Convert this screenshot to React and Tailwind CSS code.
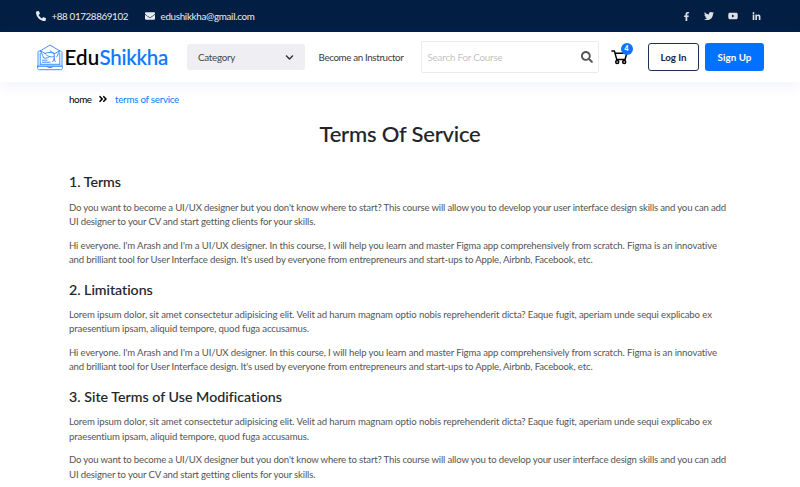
import { useLayoutEffect, useRef } from "react";
import {
  FaPhoneAlt,
  FaEnvelope,
  FaFacebookF,
  FaTwitter,
  FaYoutube,
  FaLinkedinIn,
  FaChevronDown,
  FaSearch,
  FaAngleDoubleRight,
} from "react-icons/fa";

// One line of text whose tracking is adjusted so that it fills a given measure.
function Fit({ width, className = "", children }) {
  const ref = useRef(null);
  useLayoutEffect(() => {
    const el = ref.current;
    el.style.letterSpacing = "0px";
    const natural = el.getBoundingClientRect().width;
    el.style.letterSpacing = `${(width - natural) / el.textContent.length}px`;
  }, [width]);
  return (
    <span ref={ref} className={`inline-block whitespace-nowrap ${className}`}>
      {children}
    </span>
  );
}

const want = [
  [657, "Do you want to become a UI/UX designer but you don't know where to start? This course will allow you to develop your user interface design skills and you can add"],
  [246, "UI designer to your CV and start getting clients for your skills."],
];
const arash = [
  [648, "Hi everyone. I'm Arash and I'm a UI/UX designer. In this course, I will help you learn and master Figma app comprehensively from scratch. Figma is an innovative"],
  [523.5, "and brilliant tool for User Interface design. It's used by everyone from entrepreneurs and start-ups to Apple, Airbnb, Facebook, etc."],
];
const lorem = [
  [643, "Lorem ipsum dolor, sit amet consectetur adipisicing elit. Velit ad harum magnam optio nobis reprehenderit dicta? Eaque fugit, aperiam unde sequi explicabo ex"],
  [240, "praesentium ipsam, aliquid tempore, quod fuga accusamus."],
];

const sections = [
  { title: "1. Terms", width: 52, paragraphs: [want, arash] },
  { title: "2. Limitations", width: 84, paragraphs: [lorem, arash] },
  { title: "3. Site Terms of Use Modifications", width: 213, paragraphs: [lorem, want] },
];

function LogoMark() {
  return (
    <svg viewBox="0 0 26 27" className="h-[27px] w-[26px] shrink-0" fill="none" stroke="#2b86ff" strokeWidth="0.9" strokeLinejoin="round" strokeLinecap="round">
      <path d="M4 7H2.500C1.500 7 1 7.500 1 8.500v13.600h24V8.500C25 7.500 24.500 7 23.500 7H22" />
      <path d="M3.200 20.300V9.200M22.800 20.300V9.200M3.200 20.300h19.600" />
      <path d="M3.500 6.800 13 1l9.500 5.800-4.500 2.700c-2.500-1.500-7.500-1.500-10 0L3.500 6.800Z" fill="#fff" />
      <path d="M3.500 6.800 6.800 14c3 .6 4.200-.2 5.700-1.400M13 6.600l4.200 3.600v5M8 9.500c1.500 2.500 5 4 9 3.200M22.500 6.800l-2.700 6" />
      <path d="m17.200 15-1.500 2.600M17.200 15l1 2.600M5.500 16.200h4.500M5.500 18.200h7.500" />
      <path d="M.6 22.300h24.800v1.500c0 1-.7 1.900-1.800 1.900H2.400c-1.100 0-1.800-.9-1.800-1.900v-1.500Z" fill="#fff" />
      <path d="M10 22.800c.3 1.200 5.700 1.200 6 0" />
    </svg>
  );
}

function CartIcon() {
  return (
    <svg viewBox="0 0 17 16" className="h-[16px] w-[17px]" fill="none" stroke="#000" strokeWidth="1.500" strokeLinejoin="round" strokeLinecap="round">
      <path d="M.9 1.900h2.500l2.300 8.500h8.400l1.700-6.200H4.100" />
      <circle cx="6.200" cy="13.100" r="1.500" />
      <circle cx="13.200" cy="13.100" r="1.500" />
    </svg>
  );
}

function TopBar() {
  return (
    <div className="flex h-8 items-center bg-[#021f43] pr-[39px] pl-[36px] text-[9.800px] text-[#e8ebef]">
      <FaPhoneAlt className="size-[10px]" />
      <Fit width={76.5} className="ml-[5.500px]">+88 01728869102</Fit>
      <FaEnvelope className="ml-[17px] size-[10px]" />
      <Fit width={94} className="ml-[5.500px]">edushikkha@gmail.com</Fit>
      <div className="ml-auto flex items-center text-[#dcdfe4]">
        <FaFacebookF className="size-[9px]" />
        <FaTwitter className="ml-[13px] size-[10px]" />
        <FaYoutube className="ml-[14px] size-[10px]" />
        <FaLinkedinIn className="ml-[14px] size-[9px]" />
      </div>
    </div>
  );
}

function NavBar() {
  return (
    <header className="flex h-[50px] items-center bg-white pr-9 pl-[36.500px] shadow-[0_3px_14px_rgba(80,90,240,0.09)]">
      <LogoMark />
      <div className="ml-[2px] flex w-[105px] text-[20.500px] leading-none font-medium [-webkit-text-stroke:0.15px_currentColor]">
        <Fit width={35} className="text-black">Edu</Fit>
        <Fit width={68.5} className="text-[#0a78ff]">Shikkha</Fit>
      </div>
      <button className="ml-[17px] flex h-[26px] w-[118px] shrink-0 items-center justify-between rounded-[3px] bg-[#efeff3] pr-[11px] pl-[11.500px] text-[9.800px] text-[#444]">
        <Fit width={37}>Category</Fit>
        <FaChevronDown className="size-[9px] text-[#333]" />
      </button>
      <a className="ml-[14px] text-[9.800px] text-[#3c3c3c]">
        <Fit width={85}>Become an Instructor</Fit>
      </a>
      <div className="ml-[17px] flex h-8 w-[178px] shrink-0 items-center justify-between rounded-[2px] border border-[#ebebed] pr-[5px] pl-[6px] text-[9.800px] text-[#c4c4c4]">
        <Fit width={75}>Search For Course</Fit>
        <FaSearch className="size-[12px] text-[#555]" />
      </div>
      <div className="relative ml-[12px] shrink-0">
        <CartIcon />
        <span className="absolute -top-[6.500px] left-[10px] flex size-[12px] items-center justify-center rounded-full bg-[#0a74ff] text-[7px] font-black text-white">
          4
        </span>
      </div>
      <button className="ml-auto flex h-[28px] w-[51px] items-center justify-center rounded-[3px] border border-[#1d3355] text-[9.800px] font-bold text-[#16294a]">
        <Fit width={26}>Log In</Fit>
      </button>
      <button className="ml-[6px] flex h-[28px] w-[59px] items-center justify-center rounded-[3px] bg-[#0072ff] text-[9.800px] font-bold text-white">
        <Fit width={34}>Sign Up</Fit>
      </button>
    </header>
  );
}

export default function App() {
  return (
    <div className="h-[487px] w-[800px] overflow-hidden bg-white font-['Lato','Liberation_Sans',sans-serif]">
      <TopBar />
      <NavBar />
      <main className="px-[69px]">
        <nav className="flex h-[34px] items-center text-[9.800px]">
          <Fit width={22.5} className="text-black">home</Fit>
          <FaAngleDoubleRight className="ml-[6.500px] size-[10px] text-black" />
          <Fit width={64} className="ml-[7px] text-[#0a7bff]">terms of service</Fit>
        </nav>
        <h1 className="flex h-[34px] items-center justify-center text-[22px] font-medium text-[#212529] [-webkit-text-stroke:0.1px_currentColor]">
          <Fit width={161}>Terms Of Service</Fit>
        </h1>
        <div className="mt-[22px]">
          {sections.map((s) => (
            <section key={s.title} className="h-[107.400px]">
              <h2 className="flex h-[20px] items-center text-[14.200px] font-medium text-[#212529] [-webkit-text-stroke:0.1px_currentColor]">
                <Fit width={s.width}>{s.title}</Fit>
              </h2>
              <div className="mt-[8.700px] flex flex-col gap-[9.300px] text-[9.600px] leading-[14.300px] text-[#555]">
                {s.paragraphs.map((lines, i) => (
                  <p key={i} className="flex flex-col items-start">
                    {lines.map(([w, t]) => (
                      <Fit key={t} width={w}>{t}</Fit>
                    ))}
                  </p>
                ))}
              </div>
            </section>
          ))}
        </div>
      </main>
    </div>
  );
}
